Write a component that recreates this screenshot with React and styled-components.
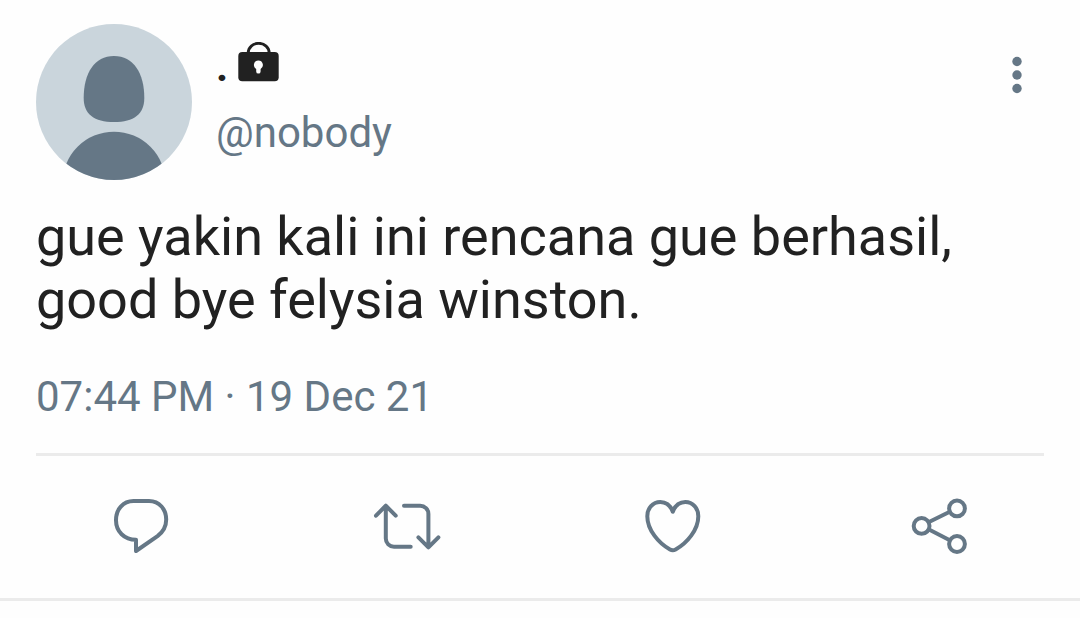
import styled, { createGlobalStyle } from 'styled-components';

const GlobalStyle = createGlobalStyle`
  * {
    box-sizing: border-box;
  }

  body {
    margin: 0;
    background: #fefefe;
    color: #212121;
    font-family: Roboto, "Liberation Sans", sans-serif;
  }
`;

const Tweet = styled.article`
  padding-top: 24px;
  border-bottom: 3px solid #ebebeb;
`;

const Content = styled.div`
  margin: 0 36px;
  padding-bottom: 32px;
  border-bottom: 3px solid #ebebeb;
`;

const Header = styled.header`
  display: flex;
  align-items: flex-start;
  gap: 24px;
`;

const AvatarSvg = styled.svg`
  flex: none;
  width: 156px;
  height: 156px;
  border-radius: 50%;
`;

const Names = styled.div`
  flex: 1;
  display: flex;
  flex-direction: column;
  align-items: flex-start;
  gap: 17px;
  padding-top: 18px;
  font-size: 42px;
  line-height: 49px;
`;

const Name = styled.h1`
  display: flex;
  align-items: flex-start;
  gap: 10px;
  margin: 0;
  font-size: 42px;
  font-weight: 700;
`;

const Handle = styled.a`
  color: #657786;
  text-decoration: none;
`;

const IconButton = styled.button`
  display: flex;
  align-items: center;
  justify-content: center;
  padding: 0;
  border: 0;
  background: none;
  color: #657786;
  cursor: pointer;
`;

const MoreButton = styled(IconButton)`
  width: 54px;
  height: 54px;
  margin-top: 24px;
`;

const Message = styled.p`
  margin: 25px 0 0;
  font-size: 54px;
  line-height: 63px;
`;

const Time = styled.time`
  display: block;
  margin-top: 41px;
  color: #657786;
  font-size: 42px;
  line-height: 49px;
`;

const Actions = styled.div`
  display: grid;
  grid-template-columns: repeat(4, 1fr);
  padding: 34px 8px 36px;
`;

const ActionIcon = styled.svg`
  width: 72px;
  height: 72px;
  fill: none;
  stroke: currentColor;
  stroke-width: 4;
  stroke-linecap: round;
  stroke-linejoin: round;
`;

function Avatar() {
  return (
    <AvatarSvg viewBox="0 0 156 156" role="img" aria-label="Avatar">
      <rect width="156" height="156" fill="#cad5dc" />
      <path
        fill="#657786"
        d="M78 32c19.5 0 30.3 17 30.3 42C108.300 90 98 98 78 98S47.700 90 47.700 74C47.700 49 58.500 32 78 32z"
      />
      <circle cx="78" cy="159.200" r="51.500" fill="#657786" />
    </AvatarSvg>
  );
}

function Lock() {
  return (
    <svg width="42" height="42" viewBox="0 1 42 42" role="img" aria-label="Protected account">
      <path d="M10.200 13v-1a10.500 9.700 0 0 1 21 0V13" fill="none" stroke="#212121" strokeWidth="2.800" />
      <rect x="0.300" y="11" width="40.400" height="29.200" rx="4" fill="#212121" />
      <path
        fill="#fefefe"
        d="M20.400 19.500a4.500 4.500 0 0 1 2.200 8.400v2.500a2.200 2.200 0 0 1-4.400 0v-2.500a4.500 4.500 0 0 1 2.200-8.400z"
      />
    </svg>
  );
}

const actions = [
  {
    label: 'Reply',
    icon: (
      <path d="M28.500 11h15.500C54.500 11 61.200 19.500 61.200 29.500c0 7-3.200 12.500-8.700 16.700L31 61V49.800c-11.700 0-20-8.300-20-19.600C11 19.500 18 11 28.500 11z" />
    ),
  },
  {
    label: 'Retweet',
    icon: (
      <>
        <path d="M5 25.700l9.800-10 9.900 10M14.800 15.700v32.800a8.200 8.200 0 0 0 8.200 8.200h16.700" />
        <path d="M33 15.700h16.200a8.200 8.200 0 0 1 8.200 8.200v33.300M47.400 47.300l10 10 10-10" />
      </>
    ),
  },
  {
    label: 'Like',
    icon: (
      <path d="M35.800 21.700C33.500 15.600 29 12 23.300 12c-7.500 0-13 6-13 14.200 0 13.800 11.400 27 22.700 33.300q2.800 1.500 5.600 0C49.900 53.200 61.300 40 61.300 26.200c0-8.200-5.500-14.200-13-14.200-5.700 0-10.200 3.600-12.500 9.700z" />
    ),
  },
  {
    label: 'Share',
    icon: (
      <>
        <path d="M26 32l20.800-10.200M26 39.500l20.800 10.700" />
        <circle cx="54" cy="18.400" r="7.900" />
        <circle cx="18.600" cy="35.900" r="7.900" />
        <circle cx="54" cy="54" r="7.900" />
      </>
    ),
  },
];

export default function App() {
  return (
    <>
      <GlobalStyle />
      <Tweet>
        <Content>
          <Header>
            <Avatar />
            <Names>
              <Name>
                <span>.</span>
                <Lock />
              </Name>
              <Handle href="#nobody">@nobody</Handle>
            </Names>
            <MoreButton type="button" aria-label="More">
              <svg width="54" height="54" viewBox="0 0 54 54" fill="currentColor">
                <circle cx="27" cy="13.500" r="4.700" />
                <circle cx="27" cy="27" r="4.700" />
                <circle cx="27" cy="40.500" r="4.700" />
              </svg>
            </MoreButton>
          </Header>
          <Message>gue yakin kali ini rencana gue berhasil, good bye felysia winston.</Message>
          <Time dateTime="2021-12-19T19:44">07:44 PM · 19 Dec 21</Time>
        </Content>
        <Actions>
          {actions.map(({ label, icon }) => (
            <IconButton key={label} type="button" aria-label={label}>
              <ActionIcon viewBox="0 0 72 72">{icon}</ActionIcon>
            </IconButton>
          ))}
        </Actions>
      </Tweet>
    </>
  );
}
